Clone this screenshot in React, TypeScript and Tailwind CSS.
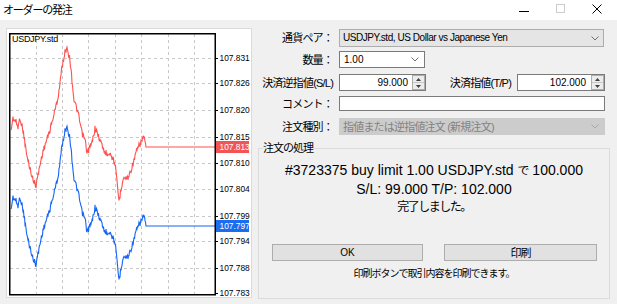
import React from "react";

const redKeys: [number, number][] = [
  [11, 130], [13, 118], [16, 122], [18, 127], [20, 118], [23, 130], [27, 157], [33, 180], [36, 185],
  [42, 155], [45, 145], [50, 130], [55, 110], [58, 98], [62, 67], [65, 52], [67, 47], [70, 60],
  [74, 100], [78, 113], [82, 133], [85, 140], [87, 153], [92, 143], [95, 128], [100, 140],
  [105, 153], [110, 153], [115, 163], [117, 183], [119, 201], [123, 178], [128, 178], [132, 167],
  [137, 150], [142, 140], [144, 136], [146, 147],
];

function hash(i: number) {
  const s = Math.sin(i * 12.9898 + 78.233) * 43758.5453;
  return s - Math.floor(s);
}

function buildPoints(keys: [number, number][], offset: number) {
  const pts: string[] = [];
  let idx = 0;
  for (let k = 0; k < keys.length - 1; k++) {
    const [x0, y0] = keys[k];
    const [x1, y1] = keys[k + 1];
    const steps = Math.max(1, Math.round((x1 - x0) * 2));
    for (let s = 0; s < steps; s++) {
      const t = s / steps;
      const x = x0 + (x1 - x0) * t;
      let y = y0 + (y1 - y0) * t;
      if (!(k === 0 && s === 0)) y += (hash(idx) - 0.5) * 6;
      pts.push(`${x.toFixed(2)},${(y + offset).toFixed(2)}`);
      idx++;
    }
  }
  const last = keys[keys.length - 1];
  pts.push(`${last[0]},${last[1] + offset}`);
  pts.push(`215,${last[1] + offset}`);
  return pts.join(" ");
}

const gridY = [58, 83, 110, 137, 163, 189, 216, 241, 268];
const gridX = [36, 62, 88, 115, 141, 168, 194];
const labels: [number, string][] = [
  [58, "107.831"], [83, "107.826"], [110, "107.820"], [137, "107.815"], [163, "107.810"],
  [189, "107.804"], [216, "107.799"], [241, "107.794"], [268, "107.788"], [293, "107.783"],
];

function Chart() {
  const red = buildPoints(redKeys, 0);
  const blue = buildPoints(redKeys, 79);
  return (
    <svg width="244" height="268" viewBox="7 29 244 268" className="block">
      <defs>
        <clipPath id="frame">
          <rect x="10" y="34" width="205" height="260" />
        </clipPath>
      </defs>
      <g stroke="#c8c8c8" strokeWidth="1" strokeDasharray="3 3">
        {gridY.map((y) => (
          <line key={"h" + y} x1="10" x2="215" y1={y + 0.5} y2={y + 0.5} />
        ))}
        {gridX.map((x) => (
          <line key={"v" + x} x1={x + 0.5} x2={x + 0.5} y1="34" y2="294" />
        ))}
      </g>
      <g clipPath="url(#frame)" fill="none" strokeWidth="1.1" strokeLinejoin="miter">
        <polyline points={red} stroke="#ff5050" />
        <polyline points={blue} stroke="#1464f5" />
      </g>
      <rect x="9.75" y="33.75" width="205.5" height="261" fill="none" stroke="#000" strokeWidth="1.5" />
      <text x="12" y="41.5" fontSize="9" fontFamily="Liberation Sans, sans-serif" fill="#000" letterSpacing="-0.3">
        USDJPY.std
      </text>
      {labels.map(([y, t]) => (
        <g key={t}>
          <line x1="215" x2="218" y1={y + 0.5} y2={y + 0.5} stroke="#000" strokeWidth="1" />
          <text x="219.5" y={y + 3} fontSize="8.4" fontFamily="Liberation Sans, sans-serif" fill="#000">
            {t}
          </text>
        </g>
      ))}
      <rect x="216" y="141" width="33" height="12" fill="#f25555" />
      <text x="219.5" y="150" fontSize="8.4" fontFamily="Liberation Sans, sans-serif" fill="#fff">
        107.813
      </text>
      <rect x="216" y="220" width="33" height="12" fill="#1a6cf0" />
      <text x="219.5" y="229" fontSize="8.4" fontFamily="Liberation Sans, sans-serif" fill="#fff">
        107.797
      </text>
    </svg>
  );
}

function Chevron({ color = "#707070" }: { color?: string }) {
  return (
    <svg width="8" height="5" viewBox="0 0 8 5">
      <path d="M0.5 0.5 L4 4 L7.5 0.5" fill="none" stroke={color} strokeWidth="1" />
    </svg>
  );
}

function Spinner() {
  return (
    <div className="w-[13px] h-full border border-[#adadad] bg-[#ececec] flex flex-col shrink-0">
      <div className="flex-1 flex items-center justify-center border-b border-[#c8c8c8]">
        <svg width="5" height="3" viewBox="0 0 5 3">
          <path d="M0 3 L2.5 0 L5 3 Z" fill="#404040" />
        </svg>
      </div>
      <div className="flex-1 flex items-center justify-center">
        <svg width="5" height="3" viewBox="0 0 5 3">
          <path d="M0 0 L2.5 3 L5 0 Z" fill="#404040" />
        </svg>
      </div>
    </div>
  );
}

const cjkLabel = "text-[11px] leading-[12px] tracking-[-0.8px] whitespace-nowrap";

export default function App() {
  return (
    <div className="w-[617px] h-[304px] bg-[#f0f0f0] flex flex-col overflow-hidden font-['Liberation_Sans','Noto_Sans_CJK_JP',sans-serif] text-black">
      {/* title bar */}
      <div className="h-[20px] bg-white flex items-center shrink-0">
        <span className="pl-[3px] text-[11px] tracking-[-1.2px] leading-[12px]">オーダーの発注</span>
        <div className="ml-auto flex items-center h-full pr-[1px]">
          <div className="w-[36px] h-full flex items-center justify-center">
            <div className="w-[10px] h-[1px] bg-black mt-[3px]" />
          </div>
          <div className="w-[36px] h-full flex items-center justify-center">
            <div className="w-[9px] h-[9px] border border-[#cccccc] mt-[-3px]" />
          </div>
          <div className="w-[38px] h-full flex items-center justify-center">
            <svg width="10" height="10" viewBox="0 0 10 10" className="mt-[-3px]">
              <path d="M0.5 0.5 L9.5 9.5 M9.5 0.5 L0.5 9.5" stroke="#000" strokeWidth="1" />
            </svg>
          </div>
        </div>
      </div>

      <div className="flex flex-1">
        {/* chart */}
        <div className="ml-[6px] mt-[8px] w-[246px] h-[270px] bg-white border border-[#dadada] shrink-0">
          <Chart />
        </div>

        {/* form */}
        <div className="flex flex-col flex-1">
          <div className="flex items-center mt-[9px] h-[18px]">
            <div className={"w-[81px] text-right " + cjkLabel}>通貨ペア：</div>
            <div className="ml-[6px] w-[265px] h-full bg-[#e5e5e5] border border-[#adadad] flex items-center pl-[3px] pr-[4px]">
              <span className="text-[10px] tracking-[-0.45px] leading-[12px]">USDJPY.std, US Dollar vs Japanese Yen</span>
              <span className="ml-auto flex"><Chevron /></span>
            </div>
          </div>

          <div className="flex items-center mt-[4px] h-[17px]">
            <div className={"w-[81px] text-right " + cjkLabel}>数量：</div>
            <div className="ml-[6px] w-[86px] h-full bg-white border border-[#7a7a7a] flex items-center pl-[4px] pr-[5px]">
              <span className="text-[10px] leading-[12px]">1.00</span>
              <span className="ml-auto flex"><Chevron /></span>
            </div>
          </div>

          <div className="flex items-center mt-[6px] h-[17px]">
            <div className={"w-[81px] text-right " + cjkLabel}>決済逆指値(S/L)</div>
            <div className="ml-[6px] w-[87px] h-full bg-white border border-[#7a7a7a] flex items-center">
              <span className="flex-1 text-right pr-[4px] text-[10px] leading-[12px]">99.000</span>
              <Spinner />
            </div>
            <div className={"w-[85px] text-right " + cjkLabel}>決済指値(T/P)</div>
            <div className="ml-[6px] w-[88px] h-full bg-white border border-[#7a7a7a] flex items-center">
              <span className="flex-1 text-right pr-[5px] text-[10px] leading-[12px]">102.000</span>
              <Spinner />
            </div>
          </div>

          <div className="flex items-center mt-[5px] h-[15px]">
            <div className={"w-[81px] text-right " + cjkLabel}>コメント：</div>
            <div className="ml-[6px] w-[266px] h-full bg-white border border-[#7a7a7a]" />
          </div>

          <div className="flex items-center mt-[7px] h-[17px]">
            <div className={"w-[81px] text-right " + cjkLabel}>注文種別：</div>
            <div className="ml-[6px] w-[266px] h-full bg-[#cccccc] border border-[#cccccc] flex items-center pl-[3px] pr-[5px]">
              <span className="text-[11px] leading-[12px] tracking-[-0.8px] text-[#838383]">指値または逆指値注文 (新規注文)</span>
              <span className="ml-auto flex"><Chevron color="#a8a8a8" /></span>
            </div>
          </div>

          <fieldset className="ml-[6px] mt-[7px] w-[352px] h-[157px] border border-[#dcdcdc] flex flex-col">
            <legend className="ml-[4px] text-[11px] leading-[12px] tracking-[-1px]">注文の処理</legend>
            <div className="pt-[7px] flex flex-col items-center">
              <div className="text-[14px] leading-[18px] whitespace-nowrap">
                #3723375 buy limit 1.00 USDJPY.std <span className="text-[12px] tracking-[-1px]">で</span> 100.000
              </div>
              <div className="text-[14px] leading-[18px] whitespace-nowrap">S/L: 99.000 T/P: 102.000</div>
              <div className="text-[12px] leading-[18px] tracking-[-1.5px] whitespace-nowrap">完了しました。</div>
            </div>
            <div className="flex mt-[28px] ml-[13px] gap-[21px]">
              <div className="w-[151px] h-[17px] bg-[#e1e1e1] border border-[#adadad] flex items-center justify-center text-[10px] leading-[12px]">
                OK
              </div>
              <div className="w-[153px] h-[17px] bg-[#e1e1e1] border border-[#adadad] flex items-center justify-center text-[11px] leading-[12px] tracking-[-1px]">
                印刷
              </div>
            </div>
            <div className="mt-[7px] text-center text-[10px] leading-[12px] tracking-[-1px] whitespace-nowrap">
              印刷ボタンで取引内容を印刷できます。
            </div>
          </fieldset>
        </div>
      </div>
    </div>
  );
}
